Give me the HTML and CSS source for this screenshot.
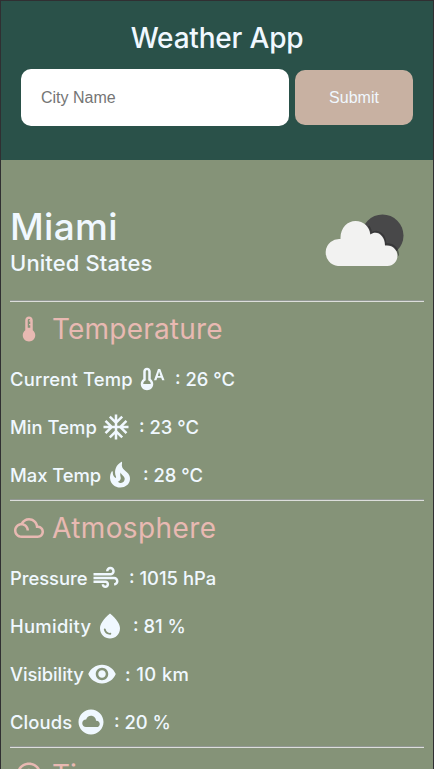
FILE: index.html
```html
<!DOCTYPE html>
<html lang="en">
<head>
<meta charset="utf-8">
<title>Weather App</title>
<link rel="stylesheet" href="styles.css">
</head>
<body>
<header class="top">
  <h1><span>Weather App</span></h1>
  <form class="search">
    <input type="text" placeholder="City Name">
    <button type="button">Submit</button>
  </form>
</header>
<main>
  <section class="place">
    <div>
      <h2><span>Miami</span></h2>
      <h3><span>United States</span></h3>
    </div>
    <svg class="sky" viewBox="0 0 80 54">
      <circle cx="57.5" cy="21.5" r="21" fill="#484849"/>
      <path d="M13 52a13 13 0 0 1 3-27C15 14 23 7 31 7c8 0 14 6 14.500 13 6-4 14 0 14.500 11 8-1 12.500 5 12.500 10.500 0 6-4 10.500-10 10.500z" fill="none" stroke="#29292b" stroke-opacity=".55" stroke-width="1.500" transform="translate(.8 -.8)" clip-path="circle(21px at 57px 22px)"/>
      <path d="M13 52a13.200 13.200 0 0 1 2.500-27C15 14 22.500 7 30.500 7c8 0 14 5.500 14.800 13.500 6.500-4.500 14.500.5 14.700 11 7.500-1 12.500 4.500 12.500 10 0 6-4.500 10.500-10 10.500z" fill="#f2f2f1"/>
    </svg>
  </section>
  <hr>
  <section class="group">
    <h2 class="title"><svg class="icon" viewBox="0 0 24 24"><path d="M15 13V5c0-1.660-1.340-3-3-3S9 3.340 9 5v8c-1.210.91-2 2.370-2 4 0 2.760 2.240 5 5 5s5-2.240 5-5c0-1.630-.79-3.090-2-4zm-4-8c0-.55.45-1 1-1s1 .45 1 1h-1v1h1v2h-1v1h1v2h-2V5z"/></svg><span class="t-temp">Temperature</span></h2>
    <p class="row"><span class="label current">Current Temp</span><svg class="icon" viewBox="0 0 24 24"><path fill-rule="evenodd" d="M11 12V6c0-1.660-1.340-3-3-3S5 4.340 5 6v6c-1.210.91-2 2.370-2 4 0 2.760 2.240 5 5 5s5-2.240 5-5c0-1.630-.79-3.090-2-4zm-6 4c0-.94.45-1.840 1.200-2.400L7 13V6c0-.55.45-1 1-1s1 .45 1 1v7l.8.6c.75.57 1.200 1.460 1.200 2.400H5z"/><path fill-rule="evenodd" d="M18.600 4h-1.800l-3.200 9h1.900l.7-2h3.200l.7 2h1.900l-3.400-9zm-1.950 5.600 1-3.500h.1l1 3.500h-2.100z"/></svg><span class="value">: 26 °C</span></p>
    <p class="row"><span class="label min">Min Temp</span><svg class="icon" viewBox="0 0 24 24"><path d="M22 11h-4.170l3.240-3.240-1.410-1.420L15 11h-2V9l4.660-4.660-1.420-1.410L13 6.170V2h-2v4.170L7.760 2.930 6.340 4.340 11 9v2H9L4.340 6.340 2.930 7.760 6.170 11H2v2h4.170l-3.240 3.240 1.410 1.420L9 13h2v2l-4.660 4.660 1.420 1.410L11 17.830V22h2v-4.170l3.240 3.240 1.420-1.410L13 15v-2h2l4.660 4.660 1.410-1.420L17.830 13H22z"/></svg><span class="value">: 23 °C</span></p>
    <p class="row"><span class="label max">Max Temp</span><svg class="icon" viewBox="0 0 24 24"><path d="M19.480 12.350c-1.570-4.080-7.160-4.300-5.810-10.230.1-.44-.37-.78-.75-.55C9.290 3.710 6.680 8 8.870 13.620c.18.46-.36.89-.75.59-1.810-1.370-2-3.340-1.840-4.750.06-.52-.62-.77-.91-.34C4.690 10.160 4 11.840 4 14.370c.38 5.600 5.110 7.320 6.810 7.540 2.430.31 5.060-.14 6.950-1.870 2.080-1.930 2.840-5.010 1.720-7.690zm-9.280 5.030c1.440-.35 2.180-1.390 2.380-2.310.33-1.430-.96-2.830-.09-5.090.33 1.870 3.270 3.040 3.270 5.080.08 2.530-2.660 4.700-5.560 2.320z"/></svg><span class="value">: 28 °C</span></p>
  </section>
  <hr>
  <section class="group">
    <h2 class="title"><svg class="icon" viewBox="0 0 24 24"><path d="M19.350 10.040C18.670 6.590 15.640 4 12 4 9.110 4 6.610 5.640 5.360 8.040 2.350 8.360 0 10.900 0 14c0 3.310 2.690 6 6 6h13c2.760 0 5-2.240 5-5 0-2.640-2.050-4.780-4.650-4.960zM19 18H6c-2.210 0-4-1.790-4-4s1.790-4 4-4 4 1.790 4 4h2c0-2.760-1.860-5.080-4.400-5.780C8.610 6.880 10.200 6 12 6c3.030 0 5.500 2.470 5.500 5.500v.5H19c1.650 0 3 1.350 3 3s-1.350 3-3 3z"/></svg><span class="t-atmo">Atmosphere</span></h2>
    <p class="row"><span class="label pressure">Pressure</span><svg class="icon" viewBox="0 0 24 24"><path d="M14.500 17c0 1.650-1.350 3-3 3s-3-1.350-3-3h2c0 .55.45 1 1 1s1-.45 1-1-.45-1-1-1H2v-2h9.500c1.650 0 3 1.350 3 3zM19 6.500C19 4.570 17.430 3 15.500 3S12 4.570 12 6.500h2c0-.83.67-1.500 1.500-1.500s1.500.67 1.500 1.500S16.330 8 15.500 8H2v2h13.500c1.930 0 3.500-1.570 3.500-3.500zm-.5 4.500H2v2h16.500c.83 0 1.500.67 1.500 1.500s-.67 1.500-1.500 1.500v2c1.930 0 3.500-1.570 3.500-3.500S20.430 11 18.500 11z"/></svg><span class="value">: 1015 hPa</span></p>
    <p class="row"><span class="label humidity">Humidity</span><svg class="icon" viewBox="0 0 24 24"><path d="M12 2c-5.330 4.550-8 8.480-8 11.800 0 4.980 3.800 8.200 8 8.200s8-3.220 8-8.200c0-3.320-2.670-7.250-8-11.800zM7.830 14c.37 0 .67.26.74.62.41 2.220 2.280 2.980 3.640 2.870.43-.02.79.32.79.75 0 .4-.32.73-.72.75-2.130.13-4.620-1.090-5.190-4.120-.08-.45.28-.87.74-.87z"/></svg><span class="value">: 81 %</span></p>
    <p class="row"><span class="label visibility">Visibility</span><svg class="icon" viewBox="0 0 24 24"><path d="M12 4.500C7 4.500 2.730 7.610 1 12c1.730 4.390 6 7.500 11 7.500s9.270-3.110 11-7.500c-1.730-4.390-6-7.500-11-7.500zM12 17c-2.760 0-5-2.240-5-5s2.240-5 5-5 5 2.240 5 5-2.240 5-5 5zm0-8c-1.660 0-3 1.340-3 3s1.340 3 3 3 3-1.340 3-3-1.340-3-3-3z"/></svg><span class="value">: 10 km</span></p>
    <p class="row"><span class="label clouds">Clouds</span><svg class="icon" viewBox="0 0 24 24"><path d="M12 2C6.480 2 2 6.480 2 12s4.480 10 10 10 10-4.480 10-10S17.520 2 12 2zm4.500 14H8c-1.660 0-3-1.340-3-3s1.340-3 3-3l.14.01C8.580 8.280 10.130 7 12 7c2.210 0 4 1.790 4 4h.5c1.380 0 2.500 1.120 2.500 2.500S17.880 16 16.500 16z"/></svg><span class="value">: 20 %</span></p>
  </section>
  <hr>
  <section class="group">
    <h2 class="title"><svg class="icon" viewBox="0 0 24 24"><path d="M11.990 2C6.470 2 2 6.480 2 12s4.470 10 9.990 10C17.520 22 22 17.520 22 12S17.520 2 11.990 2zM12 20c-4.420 0-8-3.580-8-8s3.580-8 8-8 8 3.580 8 8-3.580 8-8 8zm.5-13H11v6l5.250 3.150.75-1.230-4.500-2.670z"/></svg><span class="t-time">Time</span></h2>
  </section>
</main>
</body>
</html>
```
FILE: styles.css
```css
* { box-sizing: border-box; }

body {
  display: flex;
  flex-direction: column;
  height: 769px;
  margin: 0;
  overflow: hidden;
  border: solid #302f32;
  border-width: 1px 1px 0;
  background: #859378;
  color: aliceblue;
  font-family: Inter, "Open Sans", sans-serif;
}

h1, h2, h3, p { margin: 0; font-weight: 500; }

.top {
  flex: none;
  height: 159px;
  padding: 18px 20px 0;
  background: #2a5149;
}

h1 {
  height: 38px;
  line-height: 38px;
  font-size: 28px;
  text-align: center;
  letter-spacing: -.2px;
}

.search { display: flex; align-items: center; gap: 6px; margin-top: 12px; }

input, button {
  border: 0;
  border-radius: 10px;
  font: 16px "Liberation Sans", Arial, sans-serif;
}

input { width: 268px; height: 57px; padding: 0 20px; background: #fff; }
input::placeholder { color: #757575; }
button { width: 118px; height: 55px; padding: 0; background: #c8b1a2; color: aliceblue; }

main { flex: none; padding: 44px 9px 0; }

.place { display: flex; justify-content: space-between; height: 96px; }
.place h2 { height: 46px; line-height: 46px; font-size: 37px; letter-spacing: .3px; }
.place h3 { height: 26px; line-height: 26px; font-size: 22px; letter-spacing: .1px; }
.sky { width: 80px; height: 54px; margin: 10px 19px 0 0; }

hr {
  height: 2px;
  margin: 0;
  border: 0;
  border-top: 1px solid #929893;
  background: #dcdedb;
}

.group { height: 197px; }
.group + hr + .group { height: 245px; }

.title {
  display: flex;
  align-items: center;
  height: 53px;
  padding-left: 4px;
  gap: 8px;
  color: #e8b9b2;
  font-size: 28px;
  font-weight: 400;
}

.t-temp { letter-spacing: .2px; }
.t-atmo { letter-spacing: .4px; }

.icon { flex: none; width: 30px; height: 30px; fill: currentColor; }

.row {
  display: flex;
  align-items: center;
  height: 48px;
  font-size: 18.400px;
  white-space: pre;
}

.label { flex: none; letter-spacing: 0; }
.value { margin-left: 8px; letter-spacing: 0; }
.current { width: 127px; letter-spacing: .17px; }
.min { width: 91px; letter-spacing: .05px; }
.max { width: 95px; letter-spacing: -.05px; }
.pressure { width: 81px; letter-spacing: -.05px; }
.humidity { width: 85px; letter-spacing: .3px; }
.visibility { width: 77px; letter-spacing: -.1px; }
.visibility ~ .value { letter-spacing: .4px; }
.clouds { width: 66px; letter-spacing: .1px; }
```
